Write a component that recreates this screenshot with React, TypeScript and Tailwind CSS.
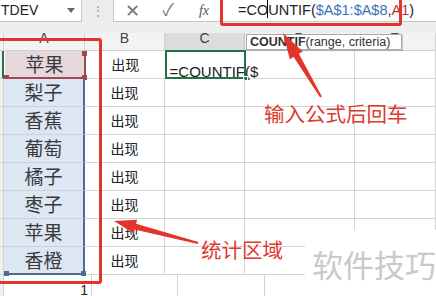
import React from 'react';

type Pt = { x: number; y: number };

// tapered annotation arrow, tip -> tail
function arrowPoints(tip: Pt, tail: Pt, headLen: number, headW: number, neckW: number, tailW: number) {
    const dx = tail.x - tip.x;
    const dy = tail.y - tip.y;
    const len = Math.hypot(dx, dy);
    const ux = dx / len;
    const uy = dy / len;
    const px = -uy;
    const py = ux;
    const bx = tip.x + ux * headLen;
    const by = tip.y + uy * headLen;
    const pts: [number, number][] = [
        [tip.x, tip.y],
        [bx + px * headW / 2, by + py * headW / 2],
        [bx + px * neckW / 2, by + py * neckW / 2],
        [tail.x + px * tailW / 2, tail.y + py * tailW / 2],
        [tail.x - px * tailW / 2, tail.y - py * tailW / 2],
        [bx - px * neckW / 2, by - py * neckW / 2],
        [bx - px * headW / 2, by - py * headW / 2]
    ];
    return pts.map((p) => p.join(',')).join(' ');
}

const fruits = ['苹果', '梨子', '香蕉', '葡萄', '橘子', '枣子', '苹果', '香橙'];

const latin = "font-['Liberation_Sans','Noto_Sans_CJK_SC',sans-serif]";
const cjk = "font-['Noto_Sans_CJK_SC',sans-serif]";

const Handle: React.FC<{ className: string }> = ({ className }) => (
    <span className={`absolute w-[5px] h-[5px] ${className}`} />
);

const App: React.FC = () => {
    return (
        <div className={`relative w-[436px] h-[296px] overflow-hidden bg-white ${latin}`}>
            {/* toolbar */}
            <div className="flex h-[22px] bg-[#ececec]">
                <div className="relative flex w-[82px] items-center bg-white border-r border-b border-[#c6c6c6] pl-[1px] text-[14px] text-[#222]">
                    TDEV
                    <span className="absolute right-[6px] top-[8px] w-0 h-0 border-l-[4px] border-r-[4px] border-t-[5px] border-l-transparent border-r-transparent border-t-[#666]" />
                </div>
                <div className="flex w-[31px] items-center justify-center text-[12px] text-[#9a9a9a] leading-none">⋮</div>
                <div className="flex flex-1 items-center bg-white border-l border-b border-[#c6c6c6]">
                    <span className="w-[36px] text-center text-[18px] text-[#777] leading-none">✕</span>
                    <span className="w-[36px] text-center text-[17px] text-[#777] leading-none">✓</span>
                    <span className="w-[36px] text-center font-['Liberation_Serif',serif] italic text-[14px] text-[#555]">fx</span>
                    <div className="relative ml-[16px] text-[14.5px] text-[#222] whitespace-nowrap">
                        =COUNTIF(<span className="text-[#3a70b8]">$A$1:$A$8</span>,<span className="text-[#b03a3a]">A1</span>)
                        <span className="absolute left-[29px] top-[0px] w-[1px] h-[18px] bg-black" />
                    </div>
                </div>
            </div>
            <div className="h-[11px] bg-[#eeeeee]" />

            {/* grid */}
            <div className="flex flex-col">
                <div className="flex h-[18px] bg-[#f3f3f3] text-[14px] text-[#444]">
                    <div className="w-[4px] border-r border-b border-[#d0d0d0]" />
                    <div className="flex w-[88px] items-end justify-center pb-[1px] border-r border-b border-[#d0d0d0]">A</div>
                    <div className="flex w-[86px] items-end justify-center pb-[1px] border-r border-b border-[#d0d0d0]">B</div>
                    <div className="flex w-[87px] items-end justify-center pb-[1px] bg-[#dcdcdc] border-r border-b border-[#c4c4c4]">C</div>
                    <div className="flex w-[118px] items-end justify-center pb-[1px] border-r border-b border-[#d0d0d0]">D</div>
                    <div className="flex w-[88px] items-end justify-center pb-[1px] border-r border-b border-[#d0d0d0]">E</div>
                </div>
                {fruits.map((f, i) => (
                    <div key={i} className="flex h-[28px]">
                        <div className={`w-[4px] bg-[#f0f0f0] border-b border-[#d0d0d0] ${i === 0 ? 'border-r-2 border-r-[#217346]' : 'border-r border-r-[#d0d0d0]'}`} />
                        <div
                            className={`relative flex w-[88px] items-center justify-center text-[19px] text-[#3a3a3a] ${cjk} ${
                                i === 0
                                    ? 'bg-[#e5d7dc] border-r-2 border-b-2 border-[#9b4a50] ml-[1px] w-[87px]'
                                    : i === 7
                                      ? 'bg-[#dde7f3] border-r-2 border-b-2 border-[#4b6c95]'
                                      : 'bg-[#dde7f3] border-r-2 border-r-[#4b6c95] border-b border-b-[#c9d2dd]'
                            }`}
                        >
                            {f}
                            {i === 0 && (
                                <>
                                    <Handle className="right-[-3px] top-[0px] bg-[#9b4a50]" />
                                    <Handle className="left-[-1px] bottom-[-3px] bg-[#9b4a50]" />
                                    <Handle className="right-[-3px] bottom-[-3px] bg-[#9b4a50]" />
                                </>
                            )}
                            {i === 7 && (
                                <>
                                    <Handle className="left-[0px] bottom-[-3px] bg-[#4b6c95]" />
                                    <Handle className="right-[-3px] bottom-[-3px] bg-[#4b6c95]" />
                                </>
                            )}
                        </div>
                        <div className={`flex w-[86px] items-center justify-center border-r border-b border-[#d4d4d4] text-[14px] text-[#222] ${cjk}`}>出现</div>
                        <div className="relative w-[87px] border-r border-b border-[#d4d4d4]">
                            {i === 0 && (
                                <div className="absolute left-[-1px] top-[-1px] right-[-1px] bottom-[-1px] border-2 border-[#217346] text-[15px] text-[#222] pl-[3px] pt-[9px] whitespace-nowrap">
                                    =COUNTIF($
                                    <Handle className="right-[-4px] bottom-[-4px] bg-[#217346] border border-white" />
                                </div>
                            )}
                        </div>
                        <div className="w-[118px] border-r border-b border-[#d4d4d4]" />
                        <div className="w-[88px] border-r border-b border-[#d4d4d4]" />
                    </div>
                ))}
                <div className="flex h-[28px]">
                    <div className="w-[4px] bg-[#f0f0f0] border-r border-[#d0d0d0]" />
                    <div className="flex w-[88px] items-start justify-end pr-[3px] pt-[5px] text-[14px] text-[#222] border-r border-[#d4d4d4]">1</div>
                    <div className="w-[86px] border-r border-[#d4d4d4]" />
                    <div className="w-[87px] border-r border-[#d4d4d4]" />
                    <div className="w-[118px] border-r border-[#d4d4d4]" />
                </div>
            </div>

            {/* tooltip */}
            <div className="absolute left-[246px] top-[34px] flex h-[16px] w-[156px] items-center border border-[#a8a8a8] bg-white pl-[3px] text-[12.5px] text-[#333] whitespace-nowrap shadow-[1px_1px_1px_rgba(0,0,0,0.15)]">
                <b className="font-bold">COUNTIF</b>(range, criteria)
            </div>

            {/* annotations */}
            <div className="absolute left-[-6px] top-[38px] h-[246px] w-[108px] rounded-[3px] border-[3px] border-[#e2332c]" />
            <div className="absolute left-[220px] top-[-6px] h-[32px] w-[182px] rounded-[3px] border-[3px] border-[#e2332c]" />

            <svg className="absolute left-0 top-0 pointer-events-none" width={436} height={296}>
                <polygon points={arrowPoints({ x: 283, y: 33 }, { x: 321, y: 97 }, 26, 15, 6, 2)} fill="#e2332c" />
                <polygon points={arrowPoints({ x: 114, y: 221 }, { x: 198, y: 243 }, 22, 14, 6, 2)} fill="#e2332c" />
            </svg>

            <div className={`absolute left-[264px] top-[103px] text-[20.5px] leading-none text-[#de3a30] ${cjk}`}>输入公式后回车</div>
            <div className={`absolute left-[201px] top-[239px] text-[20.5px] leading-none text-[#de3a30] ${cjk}`}>统计区域</div>

            <div className={`absolute left-[305px] top-[230px] right-0 bottom-0 flex items-center bg-white pl-[7px] text-[31px] leading-none text-[#c9c9c9] whitespace-nowrap ${cjk}`}>
                软件技巧
            </div>
        </div>
    );
};

export default App;
